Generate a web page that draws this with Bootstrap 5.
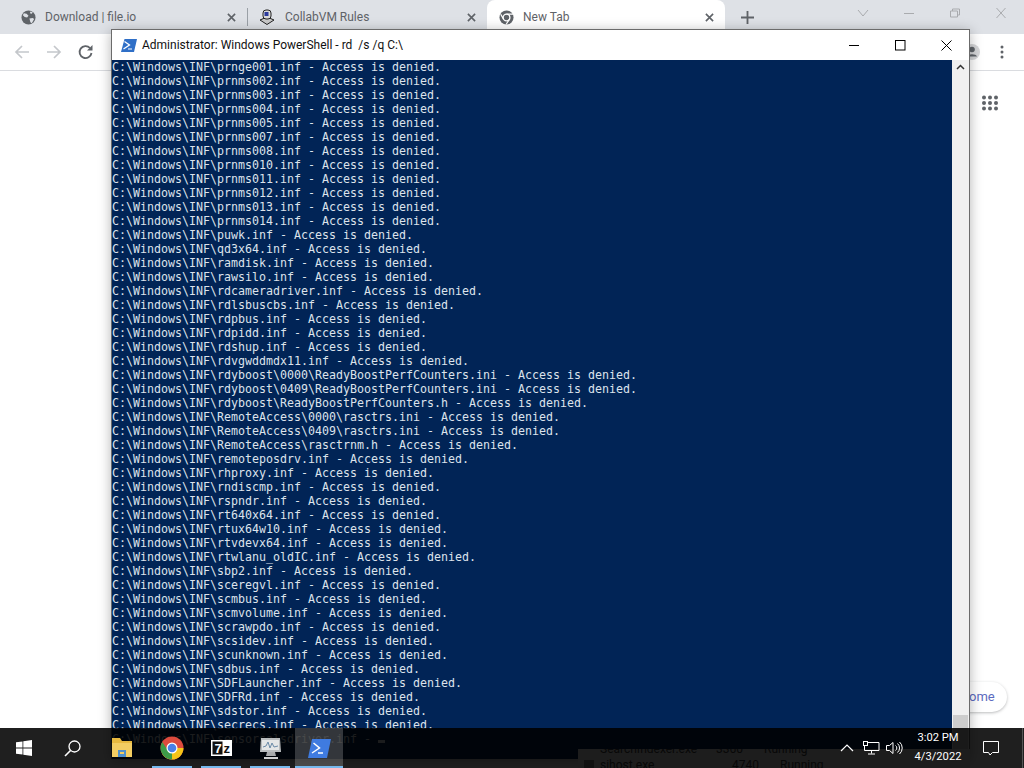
<!doctype html>
<html lang="en"><head><meta charset="utf-8"><title>Desktop</title>
<link rel="stylesheet" href="https://cdn.jsdelivr.net/npm/bootstrap@5.3.0/dist/css/bootstrap.min.css">
<style>
body{width:1024px;height:768px;overflow:hidden;position:relative;background:#fff;font-family:Roboto,"Noto Sans",sans-serif}
.tab-strip{height:34px;background:#dee1e6}
.tab-item{height:34px;font-size:12px;color:#5f6368;gap:9px;flex:none}
.tab-a{width:247px;padding-left:21px}
.tab-b{width:239px;padding-left:10px}
.tab-c{width:238px;padding-left:12px;background:#fff;border-radius:8px 8px 0 0}
.tab-x{margin-left:auto;margin-right:11px;flex:none}
.tab-sep{width:1px;height:18px;background:#9aa0a6;flex:none}
.win-btn{width:46px;height:26px;flex:none}
.chrome-tools{height:37px;border-bottom:1px solid #dadce0;padding:0 20px 0 14px;gap:16px}
.tools-end{gap:20px}
.ntp-page{height:657px}
.ntp-apps{margin:24px 25px 0 0}
.ntp-custom{margin:0 17px 16px 0;width:67px;height:30px;background:#fff;border-radius:15px;box-shadow:0 1px 3px rgba(60,64,67,.35);font-size:13px;color:#5c6bc0;line-height:30px;padding-left:29px}
.ps-win{position:absolute;left:111px;top:29px;width:859px;height:730px;background:#fff;border:1px solid #6b6b6b;border-bottom:0;box-shadow:0 2px 12px rgba(0,0,0,.3)}
.ps-title{height:30px;font-size:12px;color:#111;padding-left:9px;gap:5px;white-space:pre}
.ps-ctl span{width:46px;height:30px}
.ps-body{height:699px}
.ps-text{flex:0 0 840px;width:840px;background:#012456;color:#dde3ec;margin:0;font-family:"DejaVu Sans Mono","Liberation Mono",monospace;font-size:11.630px;line-height:14px;overflow:hidden;white-space:pre}
.ps-cursor{display:inline-block;width:7px;height:3px;background:#dde3ec}
.ps-scroll{flex:1;background:#f0f0f0;position:relative}
.ps-thumb{position:absolute;left:1px;right:1px;top:655px;height:40px;background:#cdcdcd}
.ps-up{position:absolute;top:4px;left:4px}
.task-ghost{position:absolute;left:578px;top:749px;width:392px;height:19px;background:#e8e8e8;font-size:12px;color:#444;overflow:hidden}
.ghost-rows{margin-top:-8px}
.ghost-row{height:16px;line-height:16px;padding-left:6px}
.ghost-ico{width:10px;height:10px;background:#888;margin-right:6px;align-self:center}
.ghost-name{width:132px;padding-left:16px}
.ghost-pid{width:48px}
.task-bar{position:absolute;left:0;right:0;top:728px;height:40px;background:rgba(0,0,0,.88);color:#fff;padding-right:1px}
.task-cell{height:40px;flex:none;position:relative}
.w-start{width:48px}
.w-folder{width:48px;margin-left:2px}
.w-app{width:40px;margin-left:9px}
.w-chrome{margin-left:6px}
.w-ps{width:48px;margin-left:5px}
.is-open::after{content:"";position:absolute;left:0;right:0;bottom:0;height:2px;background:#76b9ed}
.is-act{background:rgba(255,255,255,.2)}
.w-tray{width:24px}
.w-vol{width:22px}
.task-clock{width:66px;text-align:center;font-size:11.200px;line-height:19px}
.w-note{width:40px}
.task-edge{width:1px;height:40px;margin-left:11px;background:#555}
.glyph-7z{font:700 13px "Liberation Sans",sans-serif}
</style></head><body>

<div class="tab-strip d-flex align-items-center">
  <div class="tab-item tab-a d-flex align-items-center">
    <svg width="15" height="15" viewBox="0 0 16 16"><circle cx="8" cy="8" r="7.500" fill="#5f6368"/><path d="M3 3.500l3 .5 2 2-1.500 2-2.500-.5-2-2zM9 9l3.500-.5 1.500 1-2.500 4.500-1.500-1zM10 1.500l2.500 1-1 1.500-2-.5z" fill="#dee1e6"/></svg>
    <span>Download | file.io</span>
    <svg class="tab-x" width="9" height="9" viewBox="0 0 10 10"><path d="M1 1l8 8M9 1l-8 8" stroke="#5f6368" stroke-width="1.800"/></svg>
  </div>
  <div class="tab-sep"></div>
  <div class="tab-item tab-b d-flex align-items-center">
    <svg width="18" height="18" viewBox="0 0 18 18"><path d="M2 12l7-3 7 3-7 4.500z" fill="#c9c9c9" stroke="#222"/><rect x="5" y="2" width="8" height="9" rx="3" fill="#d8d8d8" stroke="#222"/><rect x="6.500" y="4" width="4" height="4" fill="#2b3a9c"/></svg>
    <span>CollabVM Rules</span>
    <svg class="tab-x" width="9" height="9" viewBox="0 0 10 10"><path d="M1 1l8 8M9 1l-8 8" stroke="#5f6368" stroke-width="1.800"/></svg>
  </div>
  <div class="tab-item tab-c d-flex align-items-center">
    <svg width="15" height="15" viewBox="0 0 16 16"><circle cx="8" cy="8" r="7.500" fill="#5f6368"/><circle cx="8" cy="8" r="3.600" fill="#5f6368" stroke="#fff" stroke-width="1.400"/><path d="M8 4.400h7M5 10L1.800 4.500M11 10l-3.500 5.500" stroke="#fff" stroke-width="1.300"/></svg>
    <span>New Tab</span>
    <svg class="tab-x" width="9" height="9" viewBox="0 0 10 10"><path d="M1 1l8 8M9 1l-8 8" stroke="#5f6368" stroke-width="1.800"/></svg>
  </div>
  <svg class="ms-3" width="13" height="13" viewBox="0 0 12 12"><path d="M6 0v12M0 6h12" stroke="#5f6368" stroke-width="1.700"/></svg>
  <div class="d-flex ms-auto align-self-start">
    <div class="win-btn d-flex align-items-center justify-content-center"><svg width="12" height="10" viewBox="0 0 12 10"><path d="M1 2l5 6 5-6" fill="none" stroke="#a9abae"/></svg></div>
    <div class="win-btn d-flex align-items-center justify-content-center"><svg width="12" height="10" viewBox="0 0 12 10"><path d="M1 5.500h10" stroke="#a9abae"/></svg></div>
    <div class="win-btn d-flex align-items-center justify-content-center"><svg width="12" height="10" viewBox="0 0 12 10"><path d="M1.500 3h7v6h-7zM3.500 3V1h7v6H8.500" fill="none" stroke="#a9abae"/></svg></div>
    <div class="win-btn d-flex align-items-center justify-content-center"><svg width="12" height="10" viewBox="0 0 12 10"><path d="M1.500 0l9 10M10.500 0l-9 10" stroke="#a9abae"/></svg></div>
  </div>
</div>

<div class="chrome-tools d-flex align-items-center">
  <svg width="16" height="16" viewBox="0 0 16 16"><path d="M15 8H2M8 2L2 8l6 6" fill="none" stroke="#c4c7cb" stroke-width="1.700"/></svg>
  <svg width="16" height="16" viewBox="0 0 16 16"><path d="M1 8h13M8 2l6 6-6 6" fill="none" stroke="#c4c7cb" stroke-width="1.700"/></svg>
  <svg width="16" height="16" viewBox="0 0 16 16"><path d="M13.500 9a6 6 0 1 1-1.500-5" fill="none" stroke="#5f6368" stroke-width="1.800"/><path d="M14.500 1v5.500H9z" fill="#5f6368"/></svg>
  <div class="tools-end d-flex align-items-center ms-auto">
    <svg width="16" height="16" viewBox="0 0 16 16"><circle cx="8" cy="8" r="8" fill="#d5d6d8"/><circle cx="8" cy="5.500" r="2.800" fill="#5f6368"/><path d="M3 12.500c1-3 9-3 10 0z" fill="#5f6368"/></svg>
    <svg width="4" height="14" viewBox="0 0 4 14"><circle cx="2" cy="2" r="1.500" fill="#5f6368"/><circle cx="2" cy="7" r="1.500" fill="#5f6368"/><circle cx="2" cy="12" r="1.500" fill="#5f6368"/></svg>
  </div>
</div>

<div class="ntp-page d-flex flex-column align-items-end justify-content-between">
  <svg class="ntp-apps" width="18" height="16" viewBox="0 0 18 16" fill="#5f6368"><circle cx="3" cy="2.500" r="2"/><circle cx="9" cy="2.500" r="2"/><circle cx="15" cy="2.500" r="2"/><circle cx="3" cy="8" r="2"/><circle cx="9" cy="8" r="2"/><circle cx="15" cy="8" r="2"/><circle cx="3" cy="13.500" r="2"/><circle cx="9" cy="13.500" r="2"/><circle cx="15" cy="13.500" r="2"/></svg>
  <div class="ntp-custom">ome</div>
</div>

<div class="ps-win">
  <div class="ps-title d-flex align-items-center">
    <svg width="16" height="13" viewBox="0 0 16 13"><path d="M3.500 0H16l-3 13H0z" fill="#2f6fc7"/><path d="M3.500 2.500l5 3.500-6 4" fill="none" stroke="#fff" stroke-width="1.300"/><path d="M7 10h4" stroke="#fff"/></svg>
    <span>Administrator: Windows PowerShell - rd  /s /q C:\</span>
    <div class="ps-ctl d-flex ms-auto">
      <span class="d-flex align-items-center justify-content-center"><svg width="11" height="11" viewBox="0 0 11 11"><path d="M0 5.500h10" stroke="#000"/></svg></span>
      <span class="d-flex align-items-center justify-content-center"><svg width="11" height="11" viewBox="0 0 11 11"><rect x=".5" y=".5" width="9.500" height="9.500" fill="none" stroke="#000"/></svg></span>
      <span class="d-flex align-items-center justify-content-center"><svg width="11" height="11" viewBox="0 0 11 11"><path d="M.5.500l10 10M10.500.500l-10 10" stroke="#000"/></svg></span>
    </div>
  </div>
  <div class="ps-body d-flex">
<pre class="ps-text">C:\Windows\INF\prnge001.inf - Access is denied.
C:\Windows\INF\prnms002.inf - Access is denied.
C:\Windows\INF\prnms003.inf - Access is denied.
C:\Windows\INF\prnms004.inf - Access is denied.
C:\Windows\INF\prnms005.inf - Access is denied.
C:\Windows\INF\prnms007.inf - Access is denied.
C:\Windows\INF\prnms008.inf - Access is denied.
C:\Windows\INF\prnms010.inf - Access is denied.
C:\Windows\INF\prnms011.inf - Access is denied.
C:\Windows\INF\prnms012.inf - Access is denied.
C:\Windows\INF\prnms013.inf - Access is denied.
C:\Windows\INF\prnms014.inf - Access is denied.
C:\Windows\INF\puwk.inf - Access is denied.
C:\Windows\INF\qd3x64.inf - Access is denied.
C:\Windows\INF\ramdisk.inf - Access is denied.
C:\Windows\INF\rawsilo.inf - Access is denied.
C:\Windows\INF\rdcameradriver.inf - Access is denied.
C:\Windows\INF\rdlsbuscbs.inf - Access is denied.
C:\Windows\INF\rdpbus.inf - Access is denied.
C:\Windows\INF\rdpidd.inf - Access is denied.
C:\Windows\INF\rdshup.inf - Access is denied.
C:\Windows\INF\rdvgwddmdx11.inf - Access is denied.
C:\Windows\INF\rdyboost\0000\ReadyBoostPerfCounters.ini - Access is denied.
C:\Windows\INF\rdyboost\0409\ReadyBoostPerfCounters.ini - Access is denied.
C:\Windows\INF\rdyboost\ReadyBoostPerfCounters.h - Access is denied.
C:\Windows\INF\RemoteAccess\0000\rasctrs.ini - Access is denied.
C:\Windows\INF\RemoteAccess\0409\rasctrs.ini - Access is denied.
C:\Windows\INF\RemoteAccess\rasctrnm.h - Access is denied.
C:\Windows\INF\remoteposdrv.inf - Access is denied.
C:\Windows\INF\rhproxy.inf - Access is denied.
C:\Windows\INF\rndiscmp.inf - Access is denied.
C:\Windows\INF\rspndr.inf - Access is denied.
C:\Windows\INF\rt640x64.inf - Access is denied.
C:\Windows\INF\rtux64w10.inf - Access is denied.
C:\Windows\INF\rtvdevx64.inf - Access is denied.
C:\Windows\INF\rtwlanu_oldIC.inf - Access is denied.
C:\Windows\INF\sbp2.inf - Access is denied.
C:\Windows\INF\sceregvl.inf - Access is denied.
C:\Windows\INF\scmbus.inf - Access is denied.
C:\Windows\INF\scmvolume.inf - Access is denied.
C:\Windows\INF\scrawpdo.inf - Access is denied.
C:\Windows\INF\scsidev.inf - Access is denied.
C:\Windows\INF\scunknown.inf - Access is denied.
C:\Windows\INF\sdbus.inf - Access is denied.
C:\Windows\INF\SDFLauncher.inf - Access is denied.
C:\Windows\INF\SDFRd.inf - Access is denied.
C:\Windows\INF\sdstor.inf - Access is denied.
C:\Windows\INF\secrecs.inf - Access is denied.
C:\Windows\INF\sensorsalsdriver.inf - <span class="ps-cursor"></span></pre>
    <div class="ps-scroll">
      <svg class="ps-up" width="9" height="6" viewBox="0 0 9 6"><path d="M1 5l3.500-3.500L8 5" fill="none" stroke="#333" stroke-width="1.500"/></svg>
      <div class="ps-thumb"></div>
    </div>
  </div>
</div>

<div class="task-ghost">
  <div class="ghost-rows">
    <div class="ghost-row d-flex"><span class="ghost-name">SearchIndexer.exe</span><span class="ghost-pid">3360</span><span>Running</span></div>
    <div class="ghost-row d-flex"><span class="ghost-ico"></span><span class="ghost-name ps-0">sihost.exe</span><span class="ghost-pid">4740</span><span>Running</span></div>
  </div>
</div>
<div class="task-bar d-flex">
  <div class="task-cell w-start d-flex align-items-center justify-content-center"><svg width="16" height="16" viewBox="0 0 16 16" fill="#fff"><path d="M0 2.300l6.500-.9v6.200H0zM7.300 1.300L16 0v7.600H7.300zM0 8.400h6.500v6.200L0 13.700zM7.300 8.400H16V16l-8.700-1.200z"/></svg></div>
  <div class="task-cell w-start d-flex align-items-center justify-content-center"><svg width="17" height="17" viewBox="0 0 17 17"><circle cx="10.500" cy="6.500" r="5.500" fill="none" stroke="#fff" stroke-width="1.300"/><path d="M6.500 10.500L1 16" stroke="#fff" stroke-width="1.600"/></svg></div>
  <div class="task-cell w-folder d-flex align-items-center justify-content-center"><svg width="22" height="20" viewBox="0 0 22 20"><path d="M1 0h8l2 3h10v4H1z" fill="#e8b93f"/><rect x="1" y="5" width="20" height="14" fill="#f3cd62"/><rect x="7" y="12" width="8" height="7" fill="#4f8fc9"/><rect x="9" y="14" width="4" height="2" fill="#f3cd62"/></svg></div>
  <div class="task-cell w-app w-chrome is-open d-flex align-items-center justify-content-center"><svg width="24" height="24" viewBox="0 0 24 24"><circle cx="12" cy="12" r="11.500" fill="#dd4b3e"/><path d="M12 12h11.500A11.500 11.500 0 0 1 12 23.500 11.500 11.500 0 0 1 2 17.500z" fill="#f5c518"/><path d="M12 12L12 23.500A11.500 11.500 0 0 1 2.300 6L7 13z" fill="#3d9b48"/><circle cx="12" cy="12" r="5.500" fill="#fff"/><circle cx="12" cy="12" r="4.300" fill="#4a80e8"/></svg></div>
  <div class="task-cell w-app is-open d-flex align-items-center justify-content-center"><svg width="21" height="16" viewBox="0 0 21 16"><rect width="21" height="16" fill="#fff"/><rect x="1.500" y="1.500" width="10" height="13" fill="#111"/><text x="3.500" y="13" class="glyph-7z" fill="#fff">7</text><text x="12.500" y="13" class="glyph-7z" fill="#111">z</text></svg></div>
  <div class="task-cell w-app is-open d-flex align-items-center justify-content-center"><svg width="23" height="23" viewBox="0 0 23 23"><path d="M2 1h19l1 14H1z" fill="#b9bcbe"/><path d="M3 3h17v10H3z" fill="#e4e6e7"/><path d="M4 10l3-1 2-4 2 6 2-5 2 4 4-1" fill="none" stroke="#6a8aa8"/><path d="M8 15h8l1 4H7z" fill="#a8aaac"/><path d="M5 20h14v2H5z" fill="#d0d1d2"/></svg></div>
  <div class="task-cell w-ps is-open is-act d-flex align-items-center justify-content-center"><svg width="23" height="19" viewBox="0 0 23 19"><path d="M4 0h19l-4 19H0z" fill="#3f7be0"/><path d="M5.500 4l6 5-7.500 5" fill="none" stroke="#fff" stroke-width="1.500"/><path d="M10 14h5" stroke="#fff" stroke-width="1.500"/></svg></div>
  <div class="task-cell w-tray ms-auto d-flex align-items-center justify-content-center"><svg width="14" height="8" viewBox="0 0 14 8"><path d="M1 7l6-6 6 6" fill="none" stroke="#fff" stroke-width="1.200"/></svg></div>
  <div class="task-cell w-tray d-flex align-items-center justify-content-center"><svg width="17" height="14" viewBox="0 0 17 14"><path d="M4.500 1.500H16v8H1.500V5M8.500 9.500v3M5 13h7" fill="none" stroke="#fff"/><rect x=".5" y=".5" width="4" height="4" fill="none" stroke="#fff"/></svg></div>
  <div class="task-cell w-vol d-flex align-items-center justify-content-center"><svg width="17" height="14" viewBox="0 0 17 14"><path d="M.500 4.500h3L7 1.500v11L3.500 9.500h-3z" fill="none" stroke="#fff"/><path d="M9.500 4.500a3 3 0 0 1 0 5M11.500 2.500a6 6 0 0 1 0 9M13.500 1a8 8 0 0 1 0 12" fill="none" stroke="#fff"/></svg></div>
  <div class="task-cell task-clock">3:02 PM<br>4/3/2022</div>
  <div class="task-cell w-note d-flex align-items-center justify-content-center"><svg width="16" height="16" viewBox="0 0 16 16"><path d="M.500 1.500h15v11H9.500L7 15l-1.500-2.500h-5z" fill="none" stroke="#fff"/></svg></div>
  <div class="task-edge"></div>
</div>
</body></html>
